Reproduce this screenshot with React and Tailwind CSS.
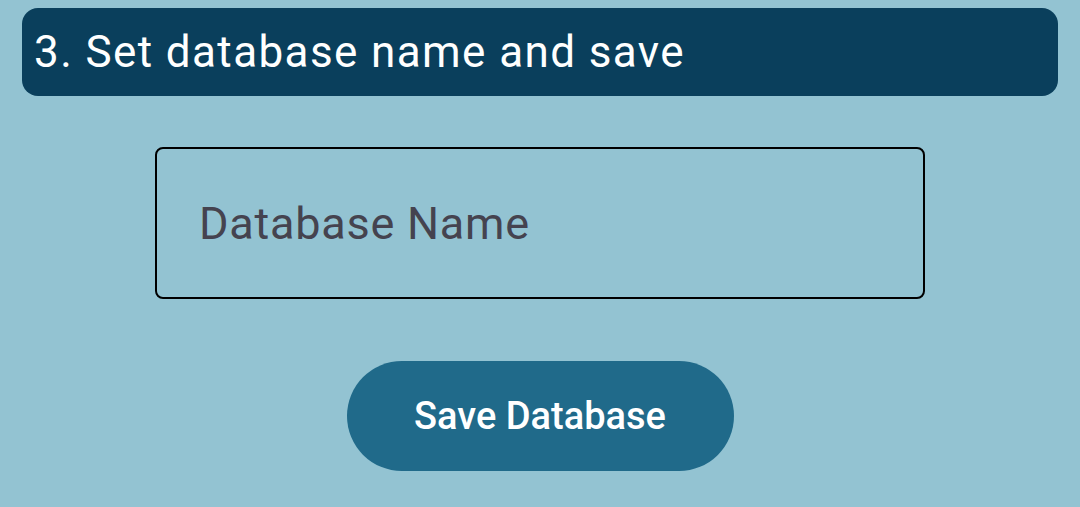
import React, { useState } from "react";

export default function App() {
  const [name, setName] = useState("");

  return (
    <div
      className="w-[1080px] h-[507px] bg-[#93c3d2] flex flex-col items-center overflow-hidden"
      style={{ fontFamily: "Roboto, 'Noto Sans', sans-serif" }}
    >
      <div className="mt-[8px] w-[1036px] h-[88px] rounded-[16px] bg-[#0a3f5c] flex items-center pl-[12px]">
        <h2 className="text-white text-[44px] tracking-[1.4px] leading-none">
          3. Set database name and save
        </h2>
      </div>

      <input
        value={name}
        onChange={(e) => setName(e.target.value)}
        placeholder="Database Name"
        className="mt-[51px] w-[770px] h-[152px] rounded-[8px] border-[2.5px] border-black bg-transparent pl-[42px] text-[45px] tracking-[0.75px] text-[#45434f] placeholder:text-[#45434f] outline-none"
      />

      <button className="mt-[62px] w-[387px] h-[110px] rounded-full bg-[#206a8a] text-white text-[38px] font-medium">
        Save Database
      </button>
    </div>
  );
}
